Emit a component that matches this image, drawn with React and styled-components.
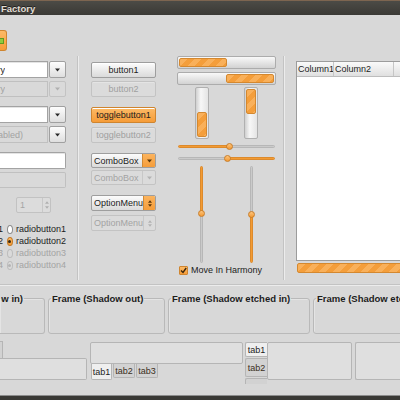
import React from "react";
import styled, { createGlobalStyle, css } from "styled-components";

const GlobalStyle = createGlobalStyle`
  html, body { margin: 0; padding: 0; background: #d8d8d8; }
  body {
    font-family: "Liberation Sans", Arial, sans-serif;
    font-size: 9px;
    color: #1c1c1c;
  }
  * { box-sizing: border-box; }
`;

const orangeFill = css`
  background: linear-gradient(#fcba66, #f69c38);
  border: 1px solid #cf852f;
`;

const stripes = css`
  background: repeating-linear-gradient(135deg, #f9b05a 0 5px, #f49e3b 5px 10px);
  border: 1px solid #d4882f;
  border-radius: 2px;
`;

const Window = styled.div`
  width: 400px;
  height: 400px;
  overflow: hidden;
  display: flex;
  flex-direction: column;
  background: #d8d8d8;
`;

const TitleBar = styled.div`
  height: 15px;
  flex-shrink: 0;
  display: flex;
  align-items: center;
  padding-left: 1px;
  background: linear-gradient(#4c4b46, #3a3935);
  border-top: 1px solid #7d6550;
  color: #e2ded5;
  font-weight: bold;
  font-size: 9.5px;
  text-shadow: 0 -1px #1e1e1e;
`;

const Toolbar = styled.div`
  height: 41px;
  flex-shrink: 0;
  padding-top: 15px;
`;

const ToolToggle = styled.div`
  width: 7px;
  height: 21px;
  display: flex;
  align-items: center;
  ${orangeFill};
  border-left: none;
  border-radius: 0 3px 3px 0;
`;

const GreenIcon = styled.span`
  width: 4px;
  height: 6px;
  background: #8fcb3f;
  border: 1px solid #5e9a22;
  border-left: none;
`;

const Main = styled.div`
  height: 224px;
  flex-shrink: 0;
  display: flex;
`;

const Column = styled.div`
  flex-shrink: 0;
  display: flex;
  flex-direction: column;
  width: ${(p) => p.$w}px;
  margin-left: ${(p) => p.$ml || 0}px;
  padding-top: ${(p) => p.$pt || 0}px;
  gap: ${(p) => p.$gap || 0}px;
`;

const VSep = styled.div`
  width: 2px;
  flex-shrink: 0;
  margin-left: ${(p) => p.$ml}px;
  border-left: 1px solid #c3c3c3;
  border-right: 1px solid #ececec;
`;

const Group = styled.div`
  display: flex;
  flex-direction: column;
  gap: ${(p) => p.$gap}px;
`;

const Tail = styled.span`
  display: flex;
  justify-content: flex-end;
  overflow: hidden;
  white-space: nowrap;
  flex-shrink: 0;
  width: ${(p) => p.$w}px;
  color: ${(p) => (p.$dim ? "#a2a2a2" : "inherit")};
`;

const Caret = ({ up, color = "#2a2a2a", w = 5 }) => (
  <svg width={w} height={Math.ceil(w / 2) + 1} viewBox="0 0 10 6">
    <path d={up ? "M0 6 L5 0 L10 6 Z" : "M0 0 L10 0 L5 6 Z"} fill={color} />
  </svg>
);

/* left column widgets */

const ComboEntry = styled.div`
  display: flex;
  height: ${(p) => p.$h || 17}px;
`;

const Field = styled.div`
  flex: 1;
  display: flex;
  align-items: center;
  border: 1px solid ${(p) => (p.$off ? "#c0c0c0" : "#a3a3a3")};
  border-left: none;
  background: ${(p) => (p.$off ? "#d9d9d9" : "#ffffff")};
  box-shadow: ${(p) => (p.$off ? "none" : "inset 0 1px #e4e4e4")};
  border-radius: 0 ${(p) => (p.$round ? "2px 2px" : "0 0")} 0;
`;

const DropButton = styled.div`
  width: 17px;
  display: flex;
  align-items: center;
  justify-content: center;
  border: 1px solid ${(p) => (p.$off ? "#c3c3c3" : "#a0a0a0")};
  border-radius: 2px;
  background: ${(p) =>
    p.$off ? "#dadada" : "linear-gradient(#fdfdfd, #dedede)"};
  margin-left: 1px;
`;

const Spin = styled.div`
  margin-left: 16px;
  width: 35px;
  height: 16px;
  display: flex;
  border: 1px solid #c2c2c2;
  border-radius: 2px;
  background: #dcdcdc;
  color: #a5a5a5;
`;

const SpinText = styled.div`
  flex: 1;
  display: flex;
  align-items: center;
  padding-left: 3px;
`;

const SpinArrows = styled.div`
  width: 8px;
  display: flex;
  flex-direction: column;
  align-items: center;
  justify-content: space-evenly;
  border-left: 1px solid #c8c8c8;
`;

const RadioList = styled.div`
  display: flex;
  flex-direction: column;
  margin-top: 1px;
`;

const RadioRow = styled.div`
  height: 12px;
  display: flex;
  align-items: center;
  color: ${(p) => (p.$off ? "#a4a4a4" : "#1c1c1c")};
`;

const Radio = styled.span`
  width: 9px;
  height: 9px;
  margin: 0 3px 0 4px;
  border-radius: 50%;
  display: flex;
  align-items: center;
  justify-content: center;
  border: 1px solid ${(p) => (p.$off ? "#bdbdbd" : p.$on ? "#c47a24" : "#8c8c8c")};
  background: ${(p) =>
    p.$off ? "#dadada" : p.$on ? "linear-gradient(#fcbc6a, #f49a34)" : "#ffffff"};
  &::after {
    content: "";
    width: 3px;
    height: 3px;
    border-radius: 50%;
    background: ${(p) => (p.$off ? "#b4b4b4" : "#3a2a12")};
    display: ${(p) => (p.$on ? "block" : "none")};
  }
`;

/* buttons column */

const Button = styled.div`
  height: 16px;
  display: flex;
  align-items: center;
  justify-content: center;
  border-radius: 2px;
  border: 1px solid #9e9e9e;
  background: linear-gradient(#fcfcfc, #dadada);
  box-shadow: inset 0 1px #ffffff;
  ${(p) => p.$active && orangeFill}
  ${(p) =>
    p.$off &&
    css`
      border-color: #c3c3c3;
      background: #dbdbdb;
      box-shadow: inset 0 1px #e4e4e4;
      color: #a0a0a0;
    `}
`;

const Combo = styled.div`
  height: ${(p) => p.$h}px;
  display: flex;
  border-radius: 2px;
  overflow: hidden;
  border: 1px solid ${(p) => (p.$off ? "#c3c3c3" : "#9e9e9e")};
  background: ${(p) => (p.$off ? "#dbdbdb" : "linear-gradient(#fcfcfc, #dadada)")};
  color: ${(p) => (p.$off ? "#a3a3a3" : "#1c1c1c")};
`;

const ComboLabel = styled.div`
  flex: 1;
  display: flex;
  align-items: center;
  padding-left: 2px;
`;

const ComboArrow = styled.div`
  width: 13px;
  display: flex;
  flex-direction: column;
  align-items: center;
  justify-content: center;
  gap: 1px;
  border-left: 1px solid ${(p) => (p.$off ? "#c8c8c8" : "#d08a35")};
  background: ${(p) => (p.$off ? "transparent" : "linear-gradient(#fcb45e, #f59d3a)")};
`;

/* progress column */

const HBar = styled.div`
  height: 13px;
  display: flex;
  justify-content: ${(p) => (p.$end ? "flex-end" : "flex-start")};
  padding: 1px;
  margin-top: ${(p) => p.$mt || 0}px;
  border: 1px solid #acacac;
  border-radius: 2px;
  background: linear-gradient(#f9f9f9, #d2d2d2);
`;

const HFill = styled.div`
  width: ${(p) => p.$w}px;
  ${stripes};
`;

const Pair = styled.div`
  display: flex;
  justify-content: space-around;
  height: ${(p) => p.$h}px;
  margin-top: ${(p) => p.$mt || 0}px;
`;

const VBar = styled.div`
  width: 14px;
  display: flex;
  flex-direction: column;
  justify-content: ${(p) => (p.$end ? "flex-end" : "flex-start")};
  padding: 1px;
  border: 1px solid #b0b0b0;
  border-radius: 2px;
  background: linear-gradient(90deg, #d0d0d0, #f7f7f7 40%, #e4e4e4);
`;

const VFill = styled.div`
  height: ${(p) => p.$h}px;
  ${stripes};
`;

const HSlider = styled.div`
  height: 8px;
  display: flex;
  align-items: center;
  padding: 0 1px;
  margin-top: ${(p) => p.$mt}px;
`;

const Track = styled.div`
  flex: ${(p) => (p.$len ? "0 0 auto" : "1")};
  ${(p) => (p.$vert ? "width: 3px;" : "height: 3px;")}
  ${(p) => p.$len && (p.$vert ? `height: ${p.$len}px;` : `width: ${p.$len}px;`)}
  border-radius: 2px;
  background: ${(p) => (p.$on ? "#f39b33" : "#cacaca")};
  border: 1px solid ${(p) => (p.$on ? "#dc8a2c" : "#b7b7b7")};
`;

const Knob = styled.span`
  width: 7px;
  height: 7px;
  flex-shrink: 0;
  border-radius: 50%;
  margin: ${(p) => (p.$vert ? "-2px 0" : "0 -2px")};
  background: linear-gradient(#fcc47c, #f49b36);
  border: 1px solid #c97d27;
  z-index: 1;
`;

const VSlider = styled.div`
  width: 8px;
  display: flex;
  flex-direction: column;
  align-items: center;
`;

const CheckRow = styled.div`
  height: 10px;
  margin-top: 2px;
  display: flex;
  align-items: center;
  gap: 3px;
  padding-left: 2px;
`;

const CheckBox = styled.span`
  width: 9px;
  height: 9px;
  display: flex;
  align-items: center;
  justify-content: center;
  border-radius: 1px;
  ${orangeFill};
`;

/* tree column */

const Tree = styled.div`
  height: 200px;
  width: 120px;
  border: 1px solid #9c9c9c;
  border-right: none;
  background: #ffffff;
`;

const TreeHead = styled.div`
  height: 15px;
  display: flex;
  background: linear-gradient(#fafafa, #e0e0e0);
  border-bottom: 1px solid #bdbdbd;
`;

const HeadCell = styled.div`
  width: ${(p) => p.$w}px;
  display: flex;
  align-items: center;
  padding-left: 1px;
  white-space: nowrap;
  overflow: hidden;
  border-right: 1px solid #c6c6c6;
`;

const WideFill = styled.div`
  height: 10px;
  width: 118px;
  margin: 2px 0 0 1px;
  ${stripes};
`;

/* frames and notebooks */

const HSep = styled.div`
  height: 2px;
  flex-shrink: 0;
  margin-top: 4px;
  border-top: 1px solid #c3c3c3;
  border-bottom: 1px solid #ececec;
`;

const FramesRow = styled.div`
  display: flex;
  gap: 3px;
  margin-top: 7px;
  flex-shrink: 0;
`;

const Frame = styled.fieldset`
  margin: 0;
  padding: 0;
  flex-shrink: 0;
  min-width: 0;
  width: ${(p) => p.$w}px;
  height: 41px;
  border: 1px solid #b9b9b9;
  border-radius: 3px;
  ${(p) =>
    p.$cut &&
    css`
      border-left: none;
      border-radius: 0 3px 3px 0;
    `}
  box-shadow: inset 1px 1px #e4e4e4;
`;

const Legend = styled.legend`
  padding: 0 1px;
  margin-left: ${(p) => (p.$cut ? 0 : 2)}px;
  font-size: 9.5px;
  font-weight: bold;
  line-height: 11px;
  white-space: nowrap;
  display: flex;
`;

const NotebookRow = styled.div`
  display: flex;
  height: 43px;
  margin-top: 7px;
  flex-shrink: 0;
  overflow: hidden;
`;

const Notebook = styled.div`
  flex-shrink: 0;
  display: flex;
  flex-direction: ${(p) => p.$dir};
  width: ${(p) => p.$w}px;
  height: 39px;
  margin-left: ${(p) => p.$ml || 0}px;
`;

const Panel = styled.div`
  flex: 1;
  background: #dfdfdf;
  border: 1px solid #b5b5b5;
  border-radius: 2px;
  margin-top: ${(p) => p.$mt || 0}px;
  ${(p) => p.$cut && "border-left: none; border-radius: 0 2px 2px 0;"}
  ${(p) => p.$open && "border-right: none;"}
`;

const TabStrip = styled.div`
  display: flex;
  flex-direction: ${(p) => (p.$vert ? "column" : "row")};
  flex-shrink: 0;
  ${(p) => (p.$vert ? "width: 22px;" : `height: ${p.$h}px;`)}
  padding-left: ${(p) => p.$pl || 0}px;
  margin-top: ${(p) => p.$mt || 0}px;
  align-items: flex-start;
  gap: ${(p) => p.$gap || 0}px;
`;

const Tab = styled.div`
  flex-shrink: 0;
  display: flex;
  align-items: center;
  justify-content: center;
  width: ${(p) => p.$w}px;
  height: ${(p) => p.$h}px;
  border: 1px solid #b5b5b5;
  background: ${(p) => (p.$active ? "#efefef" : "#d2d2d2")};
  color: ${(p) => (p.$active ? "#1c1c1c" : "#3b2f1c")};
  ${(p) => p.$side === "bottom" && "border-top: none; border-radius: 0 0 2px 2px;"}
  ${(p) => p.$side === "left" && "border-right: none; border-radius: 2px 0 0 2px;"}
  ${(p) => p.$side === "top" && "border-bottom: none; border-left: none;"}
`;

const Spacer = styled.div`
  flex: 1;
`;

const BottomBar = styled.div`
  height: 5px;
  flex-shrink: 0;
  border-top: 1px solid #8c8c8c;
  background: #3a3935;
`;

const radios = [
  { n: 1 },
  { n: 2, on: true },
  { n: 3, off: true },
  { n: 4, on: true, off: true },
];

export default function App() {
  return (
    <>
      <GlobalStyle />
      <Window>
        <TitleBar>Factory</TitleBar>
        <Toolbar>
          <ToolToggle>
            <GreenIcon />
          </ToolToggle>
        </Toolbar>

        <Main>
          <Column $w={66} $pt={5} $gap={9}>
            <Group $gap={3}>
              <ComboEntry>
                <Field>
                  <Tail $w={5}>ComboBoxEntry</Tail>
                </Field>
                <DropButton>
                  <Caret />
                </DropButton>
              </ComboEntry>
              <ComboEntry $h={16}>
                <Field $off>
                  <Tail $w={5} $dim>
                    ComboBoxEntry
                  </Tail>
                </Field>
                <DropButton $off>
                  <Caret color="#b0b0b0" />
                </DropButton>
              </ComboEntry>
            </Group>
            <Group $gap={3}>
              <ComboEntry>
                <Field />
                <DropButton>
                  <Caret />
                </DropButton>
              </ComboEntry>
              <ComboEntry>
                <Field $off>
                  <Tail $w={23} $dim>
                    (disabled)
                  </Tail>
                </Field>
                <DropButton>
                  <Caret />
                </DropButton>
              </ComboEntry>
            </Group>
            <Group $gap={3}>
              <ComboEntry>
                <Field $round />
              </ComboEntry>
              <ComboEntry $h={16}>
                <Field $off $round />
              </ComboEntry>
            </Group>
            <Spin>
              <SpinText>1</SpinText>
              <SpinArrows>
                <Caret up color="#b0b0b0" w={4} />
                <Caret color="#b0b0b0" w={4} />
              </SpinArrows>
            </Spin>
            <RadioList>
              {radios.map((r) => (
                <RadioRow key={r.n} $off={r.off}>
                  <Tail $w={3}>{`checkbutton${r.n}`}</Tail>
                  <Radio $on={r.on} $off={r.off} />
                  {`radiobutton${r.n}`}
                </RadioRow>
              ))}
            </RadioList>
          </Column>

          <VSep $ml={11} />

          <Column $w={65} $ml={12} $pt={6} $gap={10}>
            <Group $gap={3}>
              <Button>button1</Button>
              <Button $off>button2</Button>
            </Group>
            <Group $gap={4}>
              <Button $active>togglebutton1</Button>
              <Button $off>togglebutton2</Button>
            </Group>
            <Group $gap={2}>
              <Combo $h={15}>
                <ComboLabel>ComboBox</ComboLabel>
                <ComboArrow>
                  <Caret color="#5a3608" />
                </ComboArrow>
              </Combo>
              <Combo $h={15} $off>
                <ComboLabel>ComboBox</ComboLabel>
                <ComboArrow $off>
                  <Caret color="#b3b3b3" />
                </ComboArrow>
              </Combo>
            </Group>
            <Group $gap={4}>
              <Combo $h={16}>
                <ComboLabel>OptionMenu</ComboLabel>
                <ComboArrow>
                  <Caret up color="#5a3608" w={4} />
                  <Caret color="#5a3608" w={4} />
                </ComboArrow>
              </Combo>
              <Combo $h={16} $off>
                <ComboLabel>OptionMenu</ComboLabel>
                <ComboArrow $off>
                  <Caret up color="#b3b3b3" w={4} />
                  <Caret color="#b3b3b3" w={4} />
                </ComboArrow>
              </Combo>
            </Group>
          </Column>

          <Column $w={99} $ml={21}>
            <HBar>
              <HFill $w={48} />
            </HBar>
            <HBar $end $mt={3}>
              <HFill $w={48} />
            </HBar>
            <Pair $h={52} $mt={2}>
              <VBar $end>
                <VFill $h={25} />
              </VBar>
              <VBar>
                <VFill $h={25} />
              </VBar>
            </Pair>
            <HSlider $mt={3}>
              <Track $on $len={50} />
              <Knob />
              <Track />
            </HSlider>
            <HSlider $mt={4}>
              <Track $len={48} />
              <Knob />
              <Track $on />
            </HSlider>
            <Pair $h={97} $mt={4}>
              <VSlider>
                <Track $vert $on $len={46} />
                <Knob $vert />
                <Track $vert />
              </VSlider>
              <VSlider>
                <Track $vert $len={47} />
                <Knob $vert />
                <Track $vert $on />
              </VSlider>
            </Pair>
            <CheckRow>
              <CheckBox>
                <svg width="7" height="7" viewBox="0 0 7 7">
                  <path d="M1 3.5 L3 5.5 L6.2 1" fill="none" stroke="#3a260c" strokeWidth="1.4" />
                </svg>
              </CheckBox>
              Move In Harmony
            </CheckRow>
          </Column>

          <VSep $ml={7} />

          <Column $w={120} $ml={11} $pt={5}>
            <Tree>
              <TreeHead>
                <HeadCell $w={37}>Column1</HeadCell>
                <HeadCell $w={60}>Column2</HeadCell>
              </TreeHead>
            </Tree>
            <WideFill />
          </Column>
        </Main>

        <HSep />

        <FramesRow>
          <Frame $w={45} $cut>
            <Legend $cut>
              <Tail $w={22}>Frame (Shadow in)</Tail>
            </Legend>
          </Frame>
          <Frame $w={117}>
            <Legend>Frame (Shadow out)</Legend>
          </Frame>
          <Frame $w={142}>
            <Legend>Frame (Shadow etched in)</Legend>
          </Frame>
          <Frame $w={140}>
            <Legend>Frame (Shadow etched out)</Legend>
          </Frame>
        </FramesRow>

        <NotebookRow>
          <Notebook $dir="column" $w={87}>
            <TabStrip $h={17}>
              <Tab $w={3} $h={17} $side="top" />
            </TabStrip>
            <Panel $cut />
          </Notebook>
          <Notebook $dir="column" $w={153} $ml={3}>
            <Panel $mt={1} />
            <TabStrip $h={16} $pl={1} $gap={1}>
              <Tab $w={21} $h={16} $side="bottom" $active>
                tab1
              </Tab>
              <Tab $w={22} $h={14} $side="bottom">
                tab2
              </Tab>
              <Tab $w={22} $h={14} $side="bottom">
                tab3
              </Tab>
            </TabStrip>
          </Notebook>
          <Notebook $dir="row" $w={107} $ml={2}>
            <TabStrip $vert $mt={1} $gap={1}>
              <Tab $w={22} $h={15} $side="left" $active>
                tab1
              </Tab>
              <Tab $w={22} $h={19} $side="left">
                tab2
              </Tab>
              <Tab $w={22} $h={19} $side="left">
                tab3
              </Tab>
            </TabStrip>
            <Panel $mt={1} />
          </Notebook>
          <Notebook $dir="row" $w={60} $ml={3}>
            <Panel $open $mt={1} />
          </Notebook>
        </NotebookRow>

        <Spacer />
        <BottomBar />
      </Window>
    </>
  );
}
